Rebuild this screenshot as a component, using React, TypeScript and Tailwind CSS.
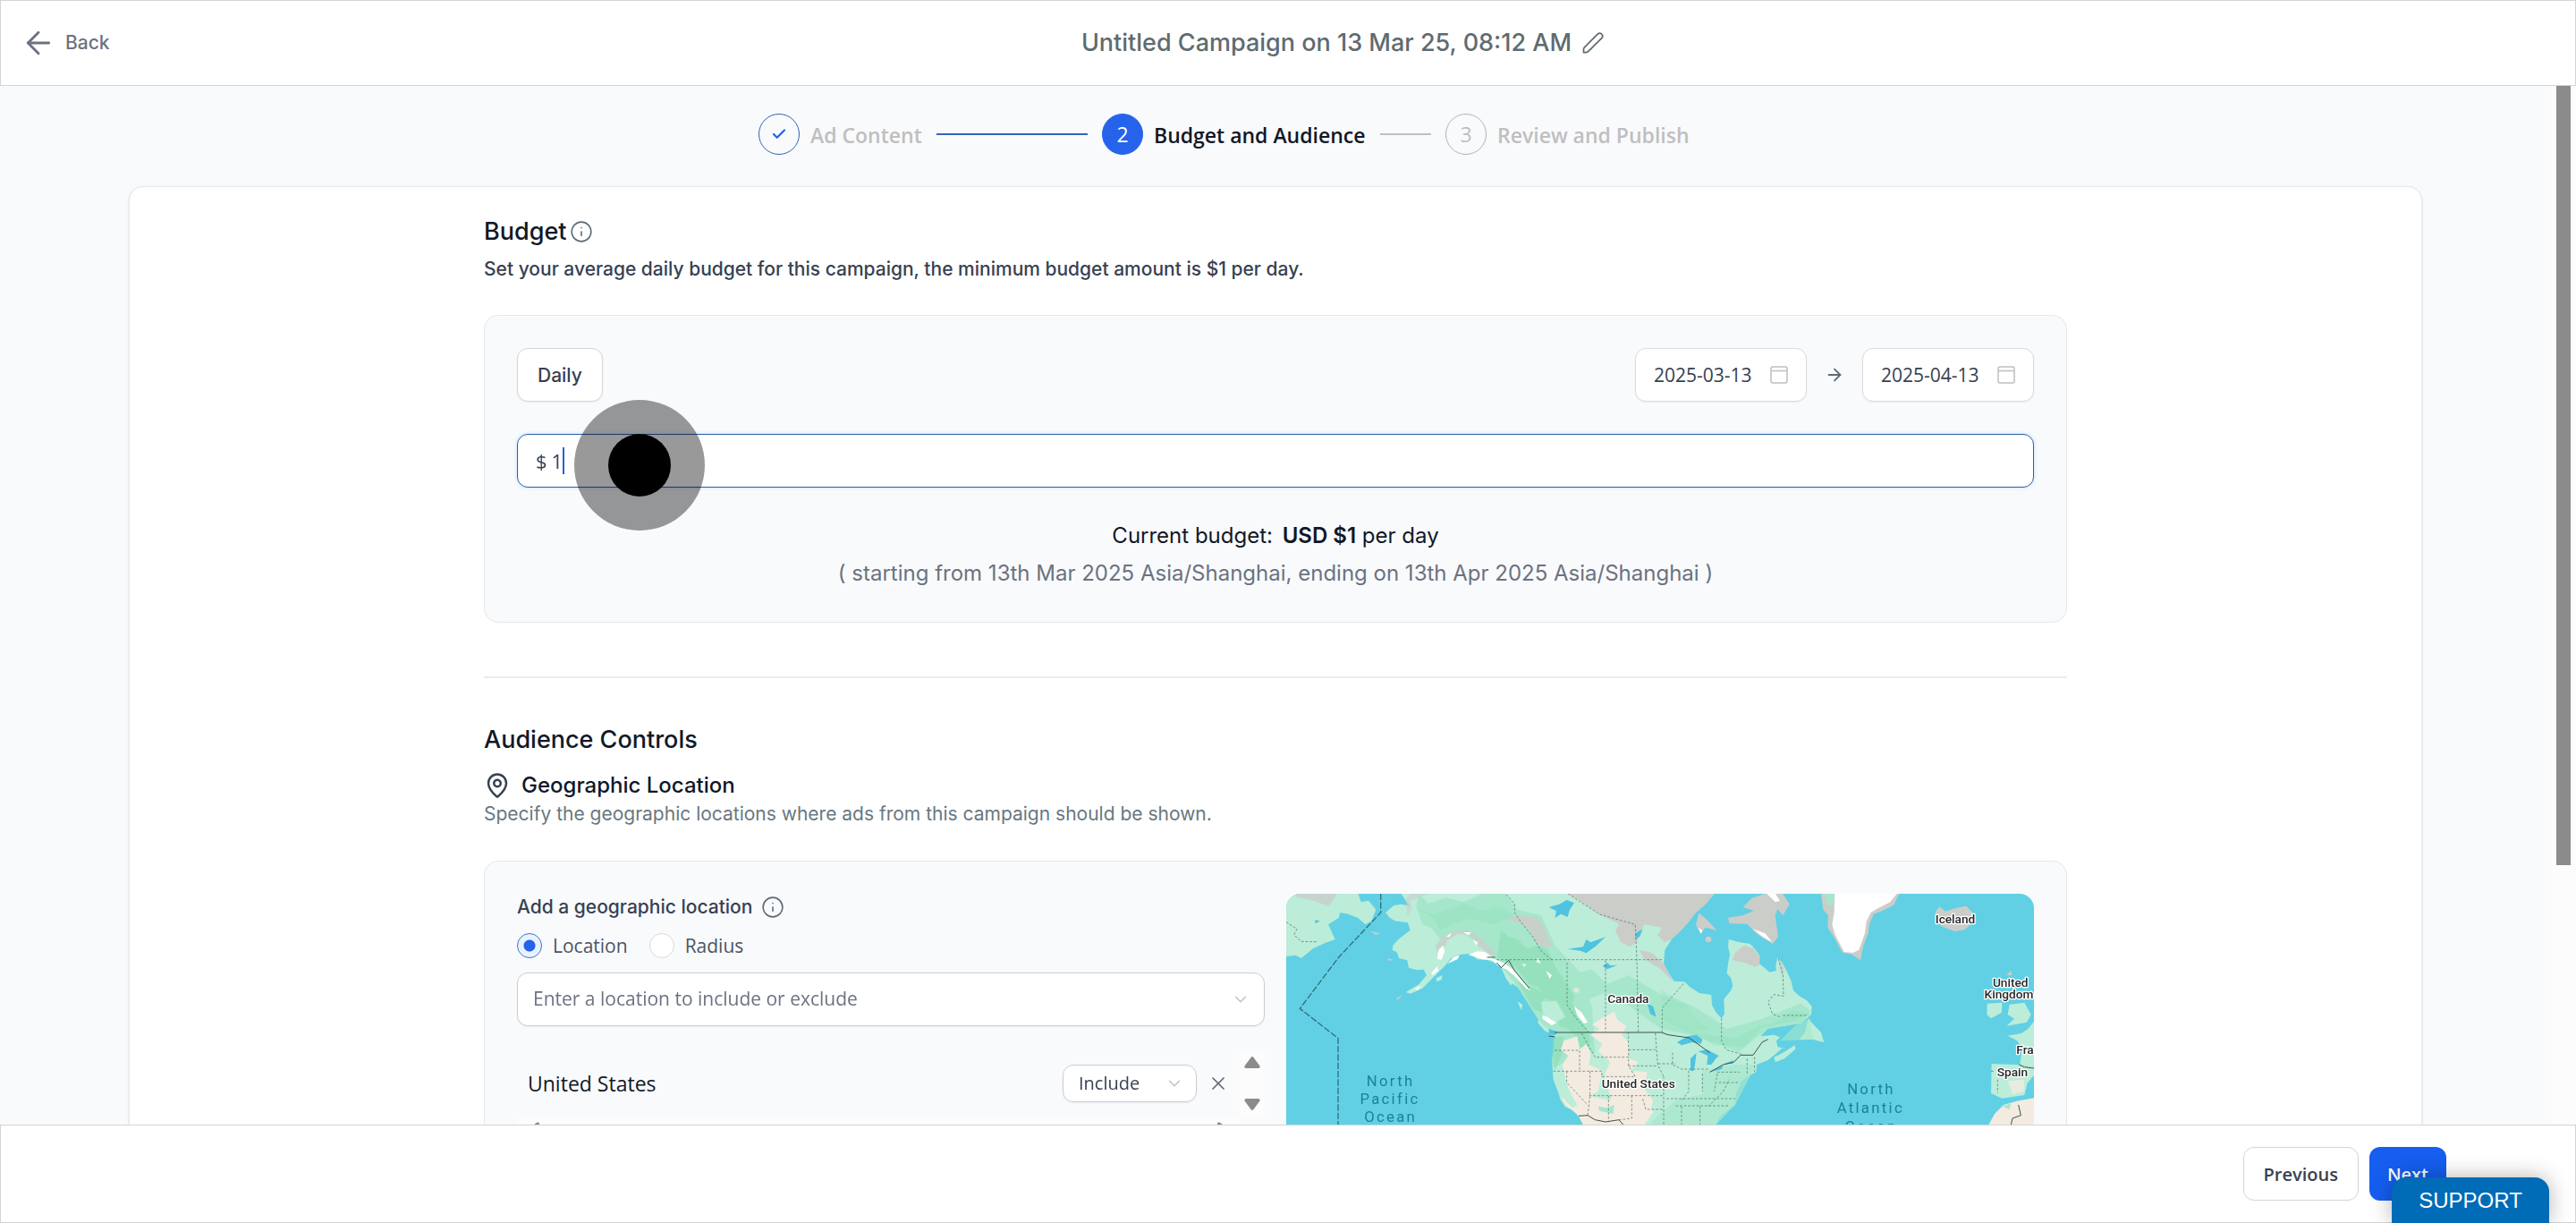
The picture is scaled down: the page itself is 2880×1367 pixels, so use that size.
import { useState } from 'react';
import { ArrowLeft, ArrowRight, Check, ChevronDown, Info, MapPin, X } from 'lucide-react';
import clsx from 'clsx';

type StepState = 'done' | 'active' | 'upcoming';

const steps: { label: string; state: StepState }[] = [
  { label: 'Ad Content', state: 'done' },
  { label: 'Budget and Audience', state: 'active' },
  { label: 'Review and Publish', state: 'upcoming' },
];

function PencilIcon() {
  return (
    <svg viewBox="0 0 24 24" className="size-6" fill="none" stroke="currentColor" strokeWidth="1.75" strokeLinejoin="round" aria-hidden="true">
      <path d="M1.500 22.500v-3.200c0-1 .4-1.900 1-2.500L17.200 2.200a3 3 0 0 1 4.500 4.400L7 21.200c-.7.700-1.600 1.300-2.600 1.300z" />
    </svg>
  );
}

function CalendarIcon() {
  return (
    <svg viewBox="0 0 20 20" className="size-5 shrink-0 text-[#bfbfbf]" fill="none" stroke="currentColor" strokeWidth="1.5" aria-hidden="true">
      <rect x="1" y="1" width="18" height="18" rx="2" />
      <path d="M1 5.5h18" />
    </svg>
  );
}

function Steps() {
  return (
    <ol className="mx-auto flex w-[1156px] pt-[31px] pr-1 pb-[35px] font-['Open_Sans',sans-serif] text-[23px] leading-[44px]">
      {steps.map((step, i) => (
        <li key={step.label} className="flex flex-1 items-center pr-4">
          <span
            className={clsx(
              'flex size-[46px] shrink-0 items-center justify-center rounded-full border',
              step.state === 'done' && 'border-[#2f62b8] text-[#2563eb]',
              step.state === 'active' && 'border-[#2563eb] bg-[#2563eb] text-white',
              step.state === 'upcoming' && 'border-[#b3b3b3] text-[#bfbfbf]',
            )}
          >
            {step.state === 'done' ? <Check className="size-[18px]" strokeWidth={3} /> : i + 1}
          </span>
          <span
            className={clsx(
              'ml-3 shrink-0 pt-[2px] font-semibold',
              step.state === 'active' ? 'text-[#111827]' : 'text-[#bfbfbf]',
            )}
          >
            {step.label}
          </span>
          {i < steps.length - 1 && (
            <span className={clsx('ml-4 h-[2px] flex-1', step.state === 'done' ? 'bg-[#3465bd]' : 'bg-[#bfbfbf]')} />
          )}
        </li>
      ))}
    </ol>
  );
}

function DateField({ label, value }: { label: string; value: string }) {
  return (
    <label className="flex h-[60px] w-48 items-center justify-between rounded-xl border border-[#d9dbdf] bg-white px-5 shadow-xs">
      <input
        type="text"
        aria-label={label}
        defaultValue={value}
        className="w-[118px] min-w-0 pt-[2px] font-['Open_Sans',sans-serif] text-[21px] text-[#374151] outline-none"
      />
      <CalendarIcon />
    </label>
  );
}

function BudgetPanel() {
  const [amount, setAmount] = useState('1');

  return (
    <div className="mt-[35px] rounded-2xl border border-[#e5e7eb] bg-[#f9fafc] px-9 pt-9 pb-[33px]">
      <div className="flex items-center justify-between">
        <button type="button" className="h-[60px] rounded-xl border border-[#d3d5d9] bg-white px-[22px] pt-[2px] text-[21px] font-medium text-[#374151] shadow-xs">
          Daily
        </button>
        <div className="flex items-center gap-5">
          <DateField label="Start date" value="2025-03-13" />
          <ArrowRight className="size-[22px] text-[#5f6b76]" strokeWidth={2} />
          <DateField label="End date" value="2025-04-13" />
        </div>
      </div>

      <label className="relative mt-9 flex h-[60px] items-center rounded-xl border border-[#2f5f9f] bg-white px-5 font-['Open_Sans',sans-serif] text-[22px] text-[#374151] shadow-[0_0_4px_#bfe3ff]">
        <span className="mr-[5px]">$</span>
        <input
          type="text"
          aria-label="Daily budget amount"
          value={amount}
          onChange={(e) => setAmount(e.target.value)}
          className="field-sizing-content outline-none"
        />
        <span className="h-[30px] w-[2px] bg-[#2563c9]" />
        {/* click highlight over the field */}
        <span className="pointer-events-none absolute -top-[39px] left-[63px] z-10 flex size-[146px] items-center justify-center rounded-full bg-black/40">
          <span className="size-[70px] rounded-full bg-black" />
        </span>
      </label>

      <div className="mt-[33px] text-center text-[24px] leading-[42px]">
        <p className="text-[#111827]">
          Current budget: <strong className="ml-1 font-semibold">USD $1</strong> per day
        </p>
        <p className="text-[#6b7280]">
          ( starting from 13th Mar 2025 Asia/Shanghai, ending on 13th Apr 2025 Asia/Shanghai )
        </p>
      </div>
    </div>
  );
}

function LocationPicker() {
  const [mode, setMode] = useState('Location');

  return (
    <div className="min-w-0 font-['Open_Sans',sans-serif]">
      <div className="flex h-[30px] items-center gap-[10px] font-['Inter',sans-serif] text-[21px] font-medium text-[#374151]">
        Add a geographic location
        <Info className="size-[26px] text-[#5f6b76]" strokeWidth={1.5} />
      </div>

      <div className="mt-[14px] flex gap-6 text-[21px] leading-7 text-[#4b5563]">
        {['Location', 'Radius'].map((option) => (
          <label key={option} className="flex items-center gap-3">
            <input
              type="radio"
              name="mode"
              value={option}
              checked={mode === option}
              onChange={() => setMode(option)}
              className="size-7 appearance-none rounded-full border border-[#d9d9d9] bg-white checked:border-[#3b74d0] checked:bg-[radial-gradient(circle,#2563eb_6px,#e9f2fd_7px)]"
            />
            {option}
          </label>
        ))}
      </div>

      <div className="relative mt-4 flex items-center">
        <select aria-label="Location" className="h-[60px] w-full appearance-none rounded-xl border border-[#c9ccd1] bg-white px-[17px] text-[21px] text-[#6b7280] shadow-xs">
          <option>Enter a location to include or exclude</option>
        </select>
        <ChevronDown className="pointer-events-none absolute right-4 size-[22px] text-[#bfbfbf]" strokeWidth={1.5} />
      </div>

      <div className="mt-[26px] flex">
        <div className="flex h-[76px] flex-1 items-center pl-3">
          <span className="flex-1 text-[23px] text-[#111827]">United States</span>
          <div className="relative flex items-center">
            <select aria-label="United States targeting" className="h-[42px] w-[150px] appearance-none rounded-xl border border-[#c9ccd1] bg-white pl-[17px] text-[20px] text-[#374151] shadow-xs">
              <option>Include</option>
              <option>Exclude</option>
            </select>
            <ChevronDown className="pointer-events-none absolute right-[14px] size-[22px] text-[#bfbfbf]" strokeWidth={1.5} />
          </div>
          <button type="button" aria-label="Remove United States" className="mr-3 ml-3 text-[#5f6b76]">
            <X className="size-6" strokeWidth={1.75} />
          </button>
        </div>
        <div className="flex w-7 flex-col items-center justify-between bg-[#fcfcfc] py-2 text-[#8b8b8b]">
          <svg viewBox="0 0 18 13" className="h-[13px] w-[18px]" fill="currentColor" aria-hidden="true">
            <path d="M7.500 1Q9 -.8 10.500 1L17.500 10.500Q18 13 16 13H2Q0 13 .5 10.500Z" />
          </svg>
          <svg viewBox="0 0 18 13" className="h-[13px] w-[18px]" fill="currentColor" aria-hidden="true">
            <path d="M7.500 12Q9 13.800 10.500 12L17.500 2.500Q18 0 16 0H2Q0 0 .5 2.500Z" />
          </svg>
        </div>
      </div>
      <div className="mr-7 flex h-7 items-center justify-between bg-[#fcfcfc] px-3 text-[#8b8b8b]">
        <svg viewBox="0 0 13 18" className="h-[18px] w-[13px]" fill="currentColor" aria-hidden="true">
          <path d="M1 7.500Q-.8 9 1 10.500L10.500 17.500Q13 18 13 16V2Q13 0 10.500 .5Z" />
        </svg>
        <svg viewBox="0 0 13 18" className="h-[18px] w-[13px]" fill="currentColor" aria-hidden="true">
          <path d="M12 7.500Q13.800 9 12 10.500L2.500 17.500Q0 18 0 16V2Q0 0 2.500 .5Z" />
        </svg>
      </div>
    </div>
  );
}

function LocationMap() {
  return (
    <svg viewBox="24 27 2508 1200" className="w-full rounded-2xl" role="img" aria-label="Map of North America">
      <rect x="24" y="27" width="2508" height="1200" fill="#61d0e4" />

      {/* land */}
      <g fill="#bbedd9">
        <path d="M24 27H265L275 55L300 50L325 80L310 118L290 130L265 108L232 95L205 90L200 108L165 130L188 180L160 190L115 210L75 243L55 233L24 237Z" />
        <path d="M410 27L425 50L440 68L410 62L385 66L357 90L372 108L388 118L432 124L440 150L428 158L400 180L382 200L380 216L395 222L402 243L430 250L435 275L462 283L485 281L495 300L470 330L445 345L425 357L440 362L480 345L515 310L540 285L560 265L575 245L600 232L640 228L665 247L700 250L720 257L745 275L765 318L800 340L825 365L840 395L850 412L870 440L868 460L890 485L925 505L925 540L915 585L920 650L935 690L945 720L960 742L985 752L1005 775L1020 802V1000L1200 1120H1340L1460 980L1450 850L1465 802L1478 775L1512 748L1530 735L1532 700L1542 675L1550 655L1580 635L1600 625L1602 600L1640 585L1665 565L1690 543L1702 548L1672 540L1668 520L1680 508L1660 500L1615 505L1638 480L1690 468L1750 462L1785 432L1787 405L1770 385L1745 370L1725 352L1718 320L1705 292L1690 262L1672 240L1666 268L1668 285L1645 290L1625 272L1611 262L1612 235L1596 212L1580 195L1545 190L1508 180L1506 205L1512 230L1506 262L1502 295L1516 310L1522 335L1515 352L1492 380L1494 430L1484 445L1466 425L1452 400L1450 366L1410 360L1378 340L1360 322L1325 320L1305 290L1290 262L1294 215L1318 178L1350 148L1375 120L1395 92L1430 62L1460 27Z" />
        <path d="M1775 445L1792 465L1818 492L1828 525L1806 520L1790 515L1745 517L1765 490Z" />
        <path d="M1660 575L1690 560L1730 535L1732 548L1695 580L1665 592Z" />
        <path d="M2375 395L2425 392L2424 425L2388 445L2374 432Z" />
        <path d="M2450 398L2500 392L2522 432L2508 458L2440 470L2466 446L2444 432Z" />
        <path d="M2532 455L2512 480L2490 495L2444 503L2476 520L2492 545L2485 600L2532 622Z" />
        <path d="M2390 597L2532 602V635L2510 662L2500 702L2425 713L2388 696Z" />
        <path d="M526 310L548 300L545 315L530 322ZM800 388L817 400L812 418ZM755 300L785 318L778 335Z" />
      </g>

      {/* forest */}
      <g fill="#a6e7cc">
        <path d="M470 27L500 60L560 40L620 55L680 27L760 27L800 80L880 100L925 200L1010 290L1050 280L1100 330L1170 300L1290 370L1380 400L1450 440L1500 480L1610 450L1750 395L1785 420L1750 462L1640 480L1600 510L1540 560L1480 530L1380 500L1280 480L1170 400L1050 420L1060 560L1000 570L925 610L925 505L870 450L800 340L745 270L680 200L600 150L540 180L510 140L480 130L460 70Z" />
        <path d="M1420 620L1530 600L1600 600L1530 735L1465 802V900L1230 900L1250 790L1330 720L1420 700Z" opacity=".7" />
        <path d="M1660 540L1730 470L1780 445L1790 515L1680 520Z" opacity=".6" />
      </g>
      <g fill="#8fdfb9" opacity=".75">
        <path d="M745 150L770 170L800 180L830 210L870 200L900 215L925 270L960 320L990 370L985 400L1015 440L1045 520L1025 580L1000 510L970 480L940 470L930 410L900 380L870 340L840 330L790 270L730 240Z" />
        <path d="M800 320L850 340L905 370L880 390L885 430L850 410Z" />
        <path d="M920 510L955 505L950 560L925 620L915 590Z" />
        <path d="M470 80L520 95L560 80L620 60L680 85L740 70L790 100L720 130L640 110L580 130L540 150L520 110Z" opacity=".5" />
        <path d="M1380 490L1440 500L1530 510L1610 470L1660 460L1720 420L1785 430L1720 455L1620 475L1560 540L1460 535Z" opacity=".6" />
        <path d="M1280 350L1370 400L1390 440L1440 480L1380 495L1290 450Z" opacity=".45" />
      </g>
      <g fill="#bbedd9">
        <path d="M880 390L930 385L960 440L925 460L885 430Z" />
        <path d="M1080 200L1180 220L1190 300L1100 290L1030 270Z" opacity=".7" />
        <path d="M1040 380L1090 360L1180 390L1100 430L1060 440Z" />
      </g>

      {/* dry plains */}
      <g fill="#f3ebe0">
        <path d="M955 520L1000 505L1008 550L1030 530L1045 560L1040 600L1085 620L1070 690L1040 705L1110 720L1130 690L1180 700L1210 680L1240 720L1255 760L1225 802L1190 860L1050 840L1020 802L1005 770L960 735L945 705L985 745L1000 735L970 680L950 600L970 570L945 550Z" />
        <path d="M1090 440L1125 422L1135 450L1165 470L1150 500L1175 530L1172 580L1205 590L1180 620L1235 625L1225 680L1255 720L1235 790L1160 802L1110 700L1090 640L1110 590L1070 555L1085 530L1045 500L1075 480L1050 465Z" />
        <path d="M2380 802L2400 765L2430 735L2475 722L2532 712V1000H2350Z" />
        <path d="M2445 655L2500 650L2498 690L2460 700Z" opacity=".8" />
        <circle cx="997" cy="350" r="9" opacity=".7" />
      </g>
      <path d="M1070 740L1100 745L1125 735L1120 765L1075 755Z" fill="#a6e7cc" />
      <path d="M2425 740L2455 730L2450 750Z" fill="#a6e7cc" />

      {/* tundra */}
      <g fill="#cbcdc9">
        <path d="M968 27L1010 50L1075 96L1140 128L1128 150L1145 188L1175 205L1200 190L1210 160L1225 130L1285 140L1270 165L1292 190L1318 178L1350 148L1375 120L1395 92L1430 62L1460 27Z" />
        <path d="M760 112L800 98L865 106L890 140L915 205L895 208L860 190L840 150L805 125Z" opacity=".9" />
        <path d="M50 27H195L180 50L165 68L120 52L60 38Z" opacity=".8" />
        <path d="M1208 215L1250 225L1290 262L1305 290L1320 320L1280 280L1225 245Z" />
        <path d="M1530 225L1560 200L1590 210L1612 238L1611 265L1595 272L1560 258L1520 250Z" />
        <path d="M1408 92L1425 105L1450 130L1468 150L1430 140L1415 160L1398 132Z" />
        <path d="M1585 42L1630 27H1690L1712 62L1690 100L1672 78L1664 100L1674 172L1655 195L1600 160L1570 128L1510 127L1506 107L1555 100L1592 84L1556 72Z" />
        <circle cx="1440" cy="180" r="10" />
        <path d="M2200 90L2215 70L2235 86L2270 75L2305 68L2330 95L2325 125L2300 147L2265 153L2220 135Z" />
        <path d="M1672 242L1690 262L1697 292L1685 300Z" opacity=".7" />
        <path d="M2440 300L2455 285L2458 300Z" />
        <path d="M430 100L445 80L440 50L500 27H440L425 45Z" opacity=".6" />
        <path d="M525 200L545 175L590 150L640 150L690 190L725 225L715 235L670 205L640 165L600 162L565 182L550 215L530 225Z" opacity=".8" />
        <path d="M1818 27H2080L2062 65L2022 85L1994 95L1980 130L1976 160L1960 200L1950 250L1920 230L1890 225L1860 170L1840 140L1842 100L1825 80Z" />
        <path d="M305 152L340 160L325 165ZM362 243L385 248L370 252ZM392 378L412 368L400 382Z" />
      </g>
      <path d="M1830 27H1862L1860 65L1838 62Z" fill="#a6e7cc" />

      {/* ice */}
      <g fill="#fff">
        <path d="M1864 27H2072L2050 55L2010 75L1985 90L1970 120L1965 160L1945 215L1925 225L1895 222L1865 165L1855 130L1862 90Z" />
        <path d="M635 232L665 220L690 222L720 245L755 260L790 285L810 312L845 350L830 346L795 308L765 282L740 270L715 250L680 246Z" />
        <path d="M530 245L535 215L550 200L556 220L545 248ZM560 170L578 158L572 172ZM618 156L645 156L635 166Z" />
        <path d="M510 295L530 270L535 285L515 300ZM565 262L585 240L605 232L600 245ZM455 345L475 335L465 350Z" />
        <path d="M895 285L915 300L908 312ZM882 435L900 440L930 460L915 468L885 448ZM990 405L1015 425L1035 458L1022 462L1000 435Z" />
        <path d="M1636 27H1665L1680 50L1665 55ZM1405 140L1420 150L1415 162ZM1590 145L1630 160L1655 190L1620 170Z" />
        <path d="M650 180L668 190L660 202ZM815 262L830 264L822 272ZM870 240L878 262L862 255Z" opacity=".8" />
      </g>

      {/* lakes */}
      <g fill="#4fc3e0">
        <path d="M905 72L940 62L965 48L990 58L975 80L968 105L945 95L925 108L930 85Z" />
        <path d="M968 212L1020 205L1030 180L1045 190L1095 172L1060 205L1030 226L1010 218Z" />
        <path d="M1085 270L1100 258L1112 268L1135 266L1100 280ZM1235 395L1255 405L1265 440L1245 430ZM1195 160L1220 145L1210 170L1195 180Z" />
        <path d="M1335 525L1370 505L1400 500L1420 515L1415 530L1385 525L1350 535Z" />
        <path d="M1380 580L1400 560L1395 600L1390 622L1380 620Z" />
        <path d="M1405 555L1435 550L1475 570L1465 580L1450 600L1435 600L1438 570Z" />
        <path d="M1445 625L1490 602L1485 615ZM1490 598L1525 585L1520 597Z" />
        <path d="M905 480L935 490L925 502L905 495ZM120 115L138 118L122 127Z" />
      </g>

      {/* borders */}
      <g fill="none" stroke="#4a6a63" strokeWidth="2.5" strokeDasharray="8 6" opacity=".8">
        <path d="M730 248H1290M915 248L880 220L850 170L810 120L790 90V60L760 27M970 27L1075 96L1195 130L1200 248L1205 492M966 258V400L1000 450L1040 492M1095 250V492M1285 492V410L1360 325" />
        <path d="M1015 495L1060 575H1172V492M925 552H1008V622M920 622H1082V640H1195L1172 604V575M1172 550H1262M1172 604H1270M1043 622V704L1035 770M965 622V660L1035 735M1040 704H1290M1105 704V790M1183 704V780L1140 785M1220 715L1230 750H1290M1262 495L1270 600L1290 640M1290 800V640M1272 597H1330M1320 560V600L1350 615H1440M1374 620V690L1350 720M1420 630V690M1300 714H1530M1330 738H1510M1350 740V802M1412 740V802M1470 630L1460 690M1470 625L1545 625M1475 660H1545M1440 740L1490 690L1510 650" />
        <path d="M1484 445V520L1500 550L1550 565M1675 245L1690 300L1692 370L1660 365L1640 390L1655 430L1680 440M1690 435H1775M1570 580V630M1595 575V625M24 122L60 145L50 165L75 187L125 188" />
        <path d="M2388 622H2400M2410 650V695" />
      </g>
      <g fill="none" stroke="#40504f" strokeWidth="3">
        <path d="M925 492H1282L1305 500L1375 510L1445 560M1445 625L1490 600L1525 592L1548 568H1590L1620 525L1640 515M905 504L925 507M1005 772L1035 770L1060 785L1095 792L1140 785L1155 802" />
        <path d="M698 240H725M730 258L745 275L770 250L790 285L840 345" />
        <path d="M2482 600L2500 608L2532 612M2480 735L2488 770L2460 780L2455 802" />
        <path d="M341 27V90L200 240L70 412L198 512V1227" stroke="#31707c" strokeWidth="4" strokeDasharray="22 6" />
      </g>

      <g fontFamily="Roboto, sans-serif" fill="#1d8296" fontSize="50" letterSpacing="7" textAnchor="middle">
        <text x="374" y="672">North</text>
        <text x="372" y="731">Pacific</text>
        <text x="374" y="793">Ocean</text>
        <text x="1986" y="698">North</text>
        <text x="1984" y="762">Atlantic</text>
        <text x="1986" y="824">Ocean</text>
      </g>
      <g fontFamily="Roboto, sans-serif" fontWeight="500" fill="#27272a" stroke="#fff" strokeWidth="8" strokeLinejoin="round" paintOrder="stroke" fontSize="41" textAnchor="middle">
        <text x="1171" y="393">Canada</text>
        <text x="1205" y="677">United States</text>
        <text x="2268" y="126">Iceland</text>
        <text x="2453" y="339">United</text>
        <text x="2448" y="379">Kingdom</text>
        <text x="2473" y="564" textAnchor="start">Fra</text>
        <text x="2460" y="640">Spain</text>
      </g>
    </svg>
  );
}

export default function App() {
  return (
    <div className="relative flex h-screen flex-col overflow-hidden bg-[#f9fafc] font-['Inter',sans-serif]">
      <header className="grid h-24 shrink-0 grid-cols-[1fr_auto_1fr] items-center border border-[#d3d4d6] bg-white px-[22px]">
        <a href="#" className="flex items-center gap-[10px] text-[21px] font-medium text-[#6b7280]">
          <ArrowLeft className="size-10" strokeWidth={1.75} />
          Back
        </a>
        <div className="ml-[122px] flex items-center gap-3 text-[#5f6b70]">
          <h1 className="text-[27px] font-medium">Untitled Campaign on 13 Mar 25, 08:12 AM</h1>
          <button type="button" aria-label="Rename campaign">
            <PencilIcon />
          </button>
        </div>
      </header>

      <div className="flex min-h-0 flex-1">
        <main className="min-w-0 flex-1 overflow-hidden px-36">
          <Steps />

          <section className="rounded-2xl border border-[#e6e8eb] bg-white pt-8 shadow-sm">
            <div className="mx-auto max-w-[1770px]">
              <h2 className="flex items-center gap-1 text-[27px] leading-9 font-medium text-[#111827]">
                Budget
                <Info className="size-[26px] text-[#5f6b76]" strokeWidth={1.5} />
              </h2>
              <p className="mt-2 text-[21px] leading-8 font-medium text-[#374151]">
                Set your average daily budget for this campaign, the minimum budget amount is $1 per day.
              </p>

              <BudgetPanel />

              <hr className="mt-[60px] border-t-2 border-[#e9ebee]" />

              <h2 className="mt-[51px] text-[27px] leading-9 font-medium text-[#111827]">Audience Controls</h2>
              <h3 className="mt-[17px] flex items-center gap-3 text-[24px] leading-8 font-medium text-[#111827]">
                <MapPin className="size-[30px] text-[#374151]" strokeWidth={2} />
                Geographic Location
              </h3>
              <p className="text-[21px] leading-8 text-[#68787f]">
                Specify the geographic locations where ads from this campaign should be shown.
              </p>

              <div className="mt-9 grid grid-cols-2 gap-6 rounded-2xl border border-[#e5e7eb] bg-[#f9fafc] p-9">
                <LocationPicker />
                <LocationMap />
              </div>
            </div>
          </section>
        </main>
        <div className="flex w-7 flex-col items-center bg-[#fcfcfc]">
          <div className="h-3/4 w-4 bg-[#8b8b8b]" />
        </div>
      </div>

      <footer className="flex h-[110px] shrink-0 items-center justify-end gap-3 border border-[#d3d4d6] bg-white px-36 font-['Open_Sans',sans-serif] text-[20px] font-semibold">
        <button type="button" className="h-[60px] rounded-xl border border-[#d3d5d9] bg-white px-[22px] pt-[2px] text-[#374151]">
          Previous
        </button>
        <button type="button" className="h-[60px] rounded-xl bg-[#155eef] px-5 pt-[2px] text-white">
          Next
        </button>
      </footer>

      <button
        type="button"
        className="absolute right-[30px] bottom-0 z-20 h-[51px] w-44 rounded-t-2xl bg-[#006bb6] font-['Liberation_Sans',sans-serif] text-[24px] text-white shadow-[0_0_24px_rgba(0,0,0,0.3)]"
      >
        SUPPORT
      </button>
    </div>
  );
}
